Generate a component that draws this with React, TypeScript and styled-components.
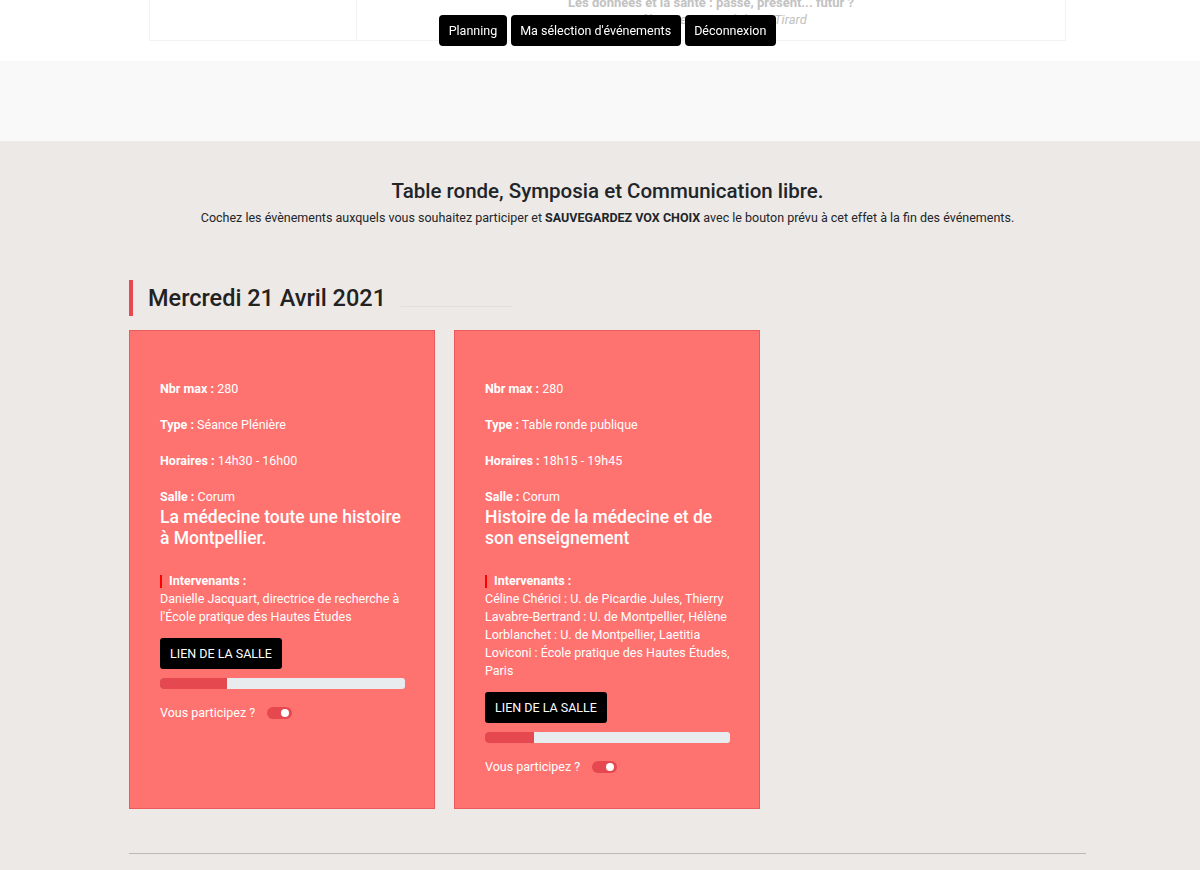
import styled, { createGlobalStyle } from "styled-components";

const GlobalStyle = createGlobalStyle`
  body {
    margin: 0;
    font-family: Roboto, "Noto Sans", "Liberation Sans", sans-serif;
    color: #212529;
    background: #ede9e6;
  }
`;

interface EventInterface {
  max: number;
  type: string;
  hours: string;
  room: string;
  title: string;
  speakers: string;
  filled: number;
}

const events: EventInterface[] = [
  {
    max: 280,
    type: "Séance Plénière",
    hours: "14h30 - 16h00",
    room: "Corum",
    title: "La médecine toute une histoire à Montpellier.",
    speakers:
      "Danielle Jacquart, directrice de recherche à l'École pratique des Hautes Études",
    filled: 27.3,
  },
  {
    max: 280,
    type: "Table ronde publique",
    hours: "18h15 - 19h45",
    room: "Corum",
    title: "Histoire de la médecine et de son enseignement",
    speakers:
      "Céline Chérici : U. de Picardie Jules, Thierry Lavabre-Bertrand : U. de Montpellier, Hélène Lorblanchet : U. de Montpellier, Laetitia Loviconi : École pratique des Hautes Études, Paris",
    filled: 20,
  },
];

// the whole page is centred on x=607, so every band gets a 15px left pad
const TopBand = styled.div`
  background: #fff;
  height: 61px;
  overflow: hidden;
  padding-left: 15px;
`;

const TopTable = styled.div`
  width: 915px;
  margin: -14px auto 0;
  display: grid;
  grid-template-columns: 207px 1fr;
  border: 1px solid #f2f2f2;
  border-top: none;
  height: 54px;
`;

const TopCell = styled.div`
  border-right: 1px solid #f2f2f2;
  &:last-child {
    border-right: none;
  }
  text-align: center;
  padding-top: 8px;
  font-size: 13px;
  line-height: 17px;
  color: #c2c2c2;
`;

const TopStrong = styled.div`
  font-weight: 700;
`;

const TopItalic = styled.div`
  font-style: italic;
  padding-left: 4px;
`;

const Nav = styled.nav`
  position: fixed;
  top: 15px;
  left: 15px;
  right: 0;
  display: flex;
  justify-content: center;
  gap: 4px;
`;

const NavButton = styled.button`
  background: #000;
  color: #fff;
  border: none;
  border-radius: 4px;
  height: 31px;
  padding: 0 9.5px;
  font-family: inherit;
  font-size: 12.5px;
`;

const GreyBand = styled.div`
  background: #f9f9f9;
  height: 80px;
`;

const Section = styled.div`
  padding-left: 15px;
`;

const Main = styled.main`
  width: 957px;
  margin: 0 auto;
  padding-top: 37px;
`;

const Title = styled.h2`
  text-align: center;
  font-size: 20.5px;
  font-weight: 500;
  margin: 0;
  line-height: 26px;
`;

const Subtitle = styled.p`
  text-align: center;
  font-size: 12.5px;
  margin: 6px 0 0;
  line-height: 16px;
`;

const DayHeading = styled.div`
  display: flex;
  align-items: center;
  margin-top: 54px;
  border-left: 4px solid #e84850;
  height: 36px;
  padding-left: 15px;
`;

const DayTitle = styled.h3`
  margin: 0;
  font-size: 23.5px;
  font-weight: 500;
  color: #222;
`;

const DayLine = styled.div`
  width: 112px;
  height: 1px;
  background: #e2dedb;
  margin: 16px 0 0 15px;
`;

const Cards = styled.div`
  display: grid;
  grid-template-columns: repeat(3, 306px);
  column-gap: 19px;
  margin-top: 14px;
`;

const Card = styled.div`
  background: #fe7270;
  border: 1px solid #ea5a5a;
  padding: 49px 29px 32px 30px;
  color: #fff;
  font-size: 12.5px;
  line-height: 18px;
`;

const Info = styled.p<{ $last?: boolean }>`
  margin: 0 0 ${(p) => (p.$last ? "0" : "18px")};
`;

const Label = styled.b`
  font-weight: 700;
`;

const CardTitle = styled.h4`
  margin: 1px 0 0;
  font-size: 17.5px;
  font-weight: 500;
  line-height: 21px;
`;

const SpeakersLabel = styled.div`
  margin-top: 23px;
  display: flex;
  align-items: center;
  font-weight: 700;
  &::before {
    content: "";
    width: 2px;
    height: 13px;
    background: #f00;
    margin-right: 7px;
  }
`;

const Speakers = styled.p`
  margin: 0;
`;

const RoomButton = styled.button`
  margin-top: 12px;
  background: #000;
  color: #fff;
  border: none;
  border-radius: 3px;
  height: 31px;
  padding: 0 10px;
  font-family: inherit;
  font-size: 12.5px;
  display: block;
`;

const Progress = styled.div`
  margin-top: 9px;
  height: 11px;
  width: 245px;
  border-radius: 3px;
  background: #e9ecef;
  overflow: hidden;
`;

const ProgressFill = styled.div`
  height: 100%;
  background: #e5484f;
`;

const Participate = styled.label`
  margin-top: 15px;
  display: flex;
  align-items: center;
  gap: 12px;
`;

const Switch = styled.span`
  width: 25px;
  height: 12px;
  border-radius: 6px;
  background: #e5484f;
  display: flex;
  align-items: center;
  justify-content: flex-end;
  padding-right: 3px;
  box-sizing: border-box;
  &::after {
    content: "";
    width: 8px;
    height: 8px;
    border-radius: 50%;
    background: #fff;
  }
`;

const Rule = styled.hr`
  margin: 44px 0 0;
  border: none;
  border-top: 1px solid #bdb9b6;
  height: 20px;
`;

function App() {
  return (
    <>
      <GlobalStyle />
      <TopBand>
        <TopTable>
          <TopCell />
          <TopCell>
            <TopStrong>Les données et la santé : passé, présent... futur ?</TopStrong>
            <TopItalic>Conférencier : Pr. Stéphane Tirard</TopItalic>
          </TopCell>
        </TopTable>
      </TopBand>
      <Nav>
        <NavButton>Planning</NavButton>
        <NavButton>Ma sélection d'événements</NavButton>
        <NavButton>Déconnexion</NavButton>
      </Nav>
      <GreyBand />
      <Section>
        <Main>
          <Title>Table ronde, Symposia et Communication libre.</Title>
          <Subtitle>
            Cochez les évènements auxquels vous souhaitez participer et{" "}
            <b>SAUVEGARDEZ VOX CHOIX</b> avec le bouton prévu à cet effet à la
            fin des événements.
          </Subtitle>
          <DayHeading>
            <DayTitle>Mercredi 21 Avril 2021</DayTitle>
            <DayLine />
          </DayHeading>
          <Cards>
            {events.map((ev, idx) => (
              <Card key={idx}>
                <Info>
                  <Label>Nbr max :</Label> {ev.max}
                </Info>
                <Info>
                  <Label>Type :</Label> {ev.type}
                </Info>
                <Info>
                  <Label>Horaires :</Label> {ev.hours}
                </Info>
                <Info $last>
                  <Label>Salle :</Label> {ev.room}
                </Info>
                <CardTitle>{ev.title}</CardTitle>
                <SpeakersLabel>Intervenants :</SpeakersLabel>
                <Speakers>{ev.speakers}</Speakers>
                <RoomButton>LIEN DE LA SALLE</RoomButton>
                <Progress>
                  <ProgressFill style={{ width: `${ev.filled}%` }} />
                </Progress>
                <Participate>
                  Vous participez ?
                  <Switch />
                </Participate>
              </Card>
            ))}
          </Cards>
          <Rule />
        </Main>
      </Section>
    </>
  );
}

export default App;
